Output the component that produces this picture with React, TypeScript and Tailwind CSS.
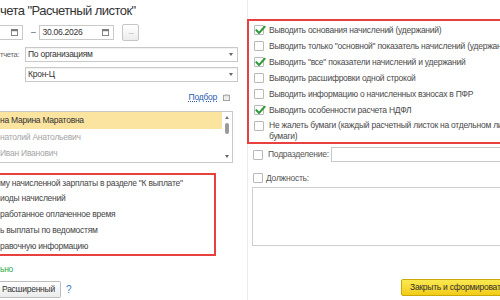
import React from "react";

const RED = "border-[#e8403f]";

function Check({ checked }: { checked?: boolean }) {
  return (
    <span className="relative inline-block w-[10px] h-[10px] shrink-0 border border-[#b9b9b9] bg-white rounded-[1px]">
      {checked && (
        <svg
          viewBox="0 0 12 10"
          className="absolute left-[0px] top-[-1px] w-[11px] h-[10px]"
        >
          <path
            d="M1.5 5.2 L4.5 8.2 L10.5 1.5"
            fill="none"
            stroke="#2f9a3a"
            strokeWidth="2.2"
            strokeLinecap="round"
            strokeLinejoin="round"
          />
        </svg>
      )}
    </span>
  );
}

function CalendarIcon() {
  return (
    <svg viewBox="0 0 8 8" className="w-[7px] h-[7px]">
      <rect x="0.5" y="0.5" width="7" height="7" fill="#fff" stroke="#777" />
      <rect x="0.5" y="0.5" width="7" height="2" fill="#777" />
    </svg>
  );
}

function Arrow() {
  return (
    <svg viewBox="0 0 4 3" className="w-[4px] h-[3px]">
      <path d="M0 0 H4 L2 3 Z" fill="#666" />
    </svg>
  );
}

function Combo({ text }: { text: string }) {
  return (
    <div className="w-[213px] h-[15px] border border-[#c9c9c9] bg-white flex items-center pl-[2px] pr-[4px] shadow-[inset_0_1px_1px_rgba(0,0,0,0.06)]">
      <span className="flex-1 text-[#333]">{text}</span>
      <Arrow />
    </div>
  );
}

const leftItems = [
  "му начисленной зарплаты в разделе \"К выплате\"",
  "иоды начислений",
  "работанное оплаченное время",
  "ь выплаты по ведомостям",
  "равочную информацию",
];

const rightItems: { text: string; checked: boolean }[] = [
  { text: "Выводить основания начислений (удержаний)", checked: true },
  { text: "Выводить только \"основной\" показатель начислений (удержаний)", checked: false },
  { text: "Выводить \"все\" показатели начислений и удержаний", checked: true },
  { text: "Выводить расшифровки одной строкой", checked: false },
  { text: "Выводить информацию о начисленных взносах в ПФР", checked: false },
  { text: "Выводить особенности расчета НДФЛ", checked: true },
];

export default function App() {
  return (
    <div className="w-[500px] h-[300px] overflow-hidden bg-white flex font-['Liberation_Sans',Arial,sans-serif] text-[8.5px] tracking-[-0.25px] text-[#444] whitespace-nowrap">
      {/* left column */}
      <div className="w-[247px] shrink-0 flex flex-col">
        <div className="h-[22px] leading-[22px] text-[13px] tracking-[-0.55px] text-[#333]">
          чета "Расчетный листок"
        </div>

        <div className="mt-[3px] h-[15px] flex items-center">
          <div className="w-[23px] h-[15px] border-y border-r border-[#c9c9c9] flex items-center justify-end pr-[4px]">
            <CalendarIcon />
          </div>
          <span className="ml-[8px] text-[#555]">–</span>
          <div className="ml-[4px] w-[75px] h-[15px] border border-[#c9c9c9] flex items-center pl-[2px] pr-[4px]">
            <span className="flex-1 text-[#333]">30.06.2026</span>
            <CalendarIcon />
          </div>
          <div className="ml-[8px] w-[17px] h-[17px] border border-[#c6c6c6] rounded-[2px] bg-gradient-to-b from-white to-[#ececec] flex items-center justify-center text-[7px] text-[#888] leading-none pb-[3px]">
            ...
          </div>
        </div>

        <div className="mt-[7px] h-[15px] flex items-center">
          <span className="w-[25px] text-[7.5px] text-[#666]">тчета:</span>
          <Combo text="По организациям" />
        </div>
        <div className="mt-[5px] h-[15px] flex items-center pl-[25px]">
          <Combo text="Крон-Ц" />
        </div>

        <div className="mt-[9px] h-[12px] flex items-center justify-end pr-[17px] gap-[6px]">
          <span className="text-[#2a5db0] underline decoration-dotted">Подбор</span>
          <svg viewBox="0 0 8 8" className="w-[7px] h-[7px]">
            <rect x="0.5" y="1.5" width="7" height="6" fill="#eee" stroke="#999" />
            <rect x="2" y="0.5" width="4" height="2" fill="#bbb" />
          </svg>
        </div>

        <div className="mt-[8px] w-[233px] h-[52px] border-y border-r border-[#c9c9c9] flex">
          <div className="flex-1 flex flex-col">
            <div className="h-[18px] bg-[#fbe3a0] flex items-center text-[#333]">на Марина Маратовна</div>
            <div className="h-[17px] flex items-center text-[#a5a5a5]">натолий Анатольевич</div>
            <div className="h-[17px] flex items-center text-[#a5a5a5]">Иван Иванович</div>
          </div>
          <div className="w-[10px] flex flex-col items-center py-[4px]">
            <svg viewBox="0 0 4 3" className="w-[4px] h-[3px]">
              <path d="M0 3 H4 L2 0 Z" fill="#777" />
            </svg>
            <div className="mt-[4px] w-[4px] h-[11px] rounded-[2px] bg-[#9a9a9a]" />
            <div className="flex-1" />
            <Arrow />
          </div>
        </div>

        <div className={`mt-[10px] w-[216px] h-[83px] border-2 border-l-0 ${RED} flex flex-col`}>
          {leftItems.map((t) => (
            <div key={t} className="h-[16px] flex items-center text-[#444]">
              {t}
            </div>
          ))}
        </div>

        <div className="mt-[7px] h-[12px] flex items-center text-[#2ba84a]">ьно</div>

        <div className="mt-[6px] h-[17px] flex items-center">
          <div className="w-[61px] h-[17px] border-y border-r border-[#bdbdbd] rounded-r-[2px] bg-gradient-to-b from-white to-[#ebebeb] flex items-center pl-[2px] text-[#333]">
            Расширенный
          </div>
          <span className="ml-[5px] text-[10px] text-[#3a78c9]">?</span>
        </div>
      </div>

      {/* right column */}
      <div className="flex-1 flex flex-col border-l border-[#ececec]">
        <div className={`mt-[19px] w-[270px] h-[125px] border-2 border-r-0 ${RED} -ml-[1px] pl-[5px] pt-[1px] flex flex-col`}>
          {rightItems.map((it) => (
            <div key={it.text} className="h-[16px] flex items-center gap-[5px] text-[#4a4a4a]">
              <Check checked={it.checked} />
              <span>{it.text}</span>
            </div>
          ))}
          <div className="flex items-start gap-[5px] leading-[11px] text-[#4a4a4a] pt-[2px]">
            <span className="mt-[1px]">
              <Check />
            </span>
            <span>
              Не жалеть бумаги (каждый расчетный листок на отдельном листе
              <br />
              бумаги)
            </span>
          </div>
        </div>

        <div className="mt-[3px] h-[15px] flex items-center pl-[5px]">
          <Check />
          <span className="ml-[5px] text-[#555]">Подразделение:</span>
          <div className="ml-[2px] flex-1 h-[15px] border border-r-0 border-[#c9c9c9] bg-white" />
        </div>

        <div className="mt-[10px] h-[12px] flex items-center pl-[5px]">
          <Check />
          <span className="ml-[3px] text-[#555]">Должность:</span>
        </div>

        <div className="mt-[3px] ml-[4px] h-[59px] border border-r-0 border-[#cfcfcf] bg-white" />

        <div className="mt-[33px] h-[17px] flex pl-[153px]">
          <div className="w-[120px] h-[17px] border border-[#c9a80a] rounded-[2px] bg-gradient-to-b from-[#fbe94f] to-[#f2cc12] flex items-center pl-[8px] text-[#333]">
            Закрыть и сформировать
          </div>
        </div>
      </div>
    </div>
  );
}
